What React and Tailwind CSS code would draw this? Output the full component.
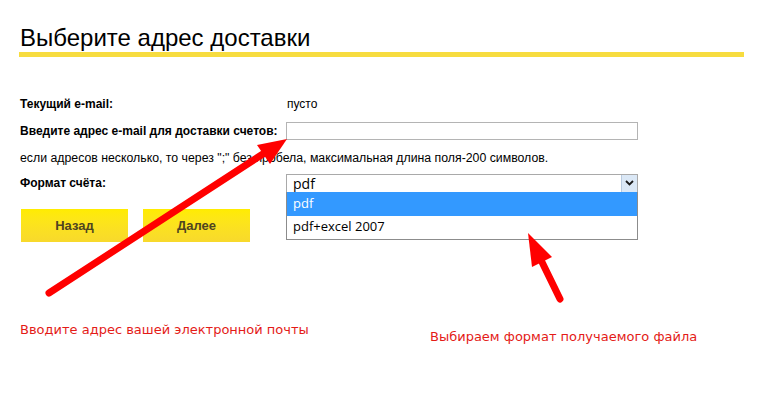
import React from "react";

function Arrows() {
  return (
    <svg
      className="absolute left-0 top-0 pointer-events-none"
      width="761"
      height="399"
      viewBox="0 0 761 399"
    >
      {/* arrow to the e-mail field */}
      <line x1="49" y1="293" x2="266" y2="152" stroke="#ff0000" strokeWidth="7" strokeLinecap="round" />
      <polygon points="287,139 270,164 257,145" fill="#ff0000" />
      {/* arrow to the format list */}
      <line x1="560" y1="299" x2="540" y2="258" stroke="#ff0000" strokeWidth="7" strokeLinecap="round" />
      <polygon points="528,233 552,257 532,267" fill="#ff0000" />
    </svg>
  );
}

function App() {
  return (
    <div
      className="relative w-[761px] h-[399px] bg-white overflow-hidden text-black"
      style={{ fontFamily: '"Liberation Sans", Arial, sans-serif' }}
    >
      <div className="pl-[19px] pt-[24px]">
        <h1 className="w-[725px] pl-[1px] text-[24px] leading-[28px] border-b-[5px] border-[#f7dc3f]">
          Выберите адрес доставки
        </h1>

        <div className="pl-[1px] text-[12px]">
          <div className="flex items-center h-[14px] mt-[40px]">
            <span className="w-[267px] font-bold">Текущий e-mail:</span>
            <span>пусто</span>
          </div>

          <div className="flex items-center h-[18px] mt-[11px]">
            <span className="w-[266px] font-bold">Введите адрес e-mail для доставки счетов:</span>
            <div className="w-[352px] h-[18px] border border-[#b4b4b4] bg-white" />
          </div>

          <div className="flex items-center h-[14px] mt-[11px] text-[12.3px]">
            если адресов несколько, то через ";" без пробела, максимальная длина поля-200 символов.
          </div>

          <div className="flex items-center h-[18px] mt-[9px]">
            <span className="w-[266px] font-bold">Формат счёта:</span>
            <div className="relative w-[352px]">
              <div
                className="flex items-center justify-between h-[19px] border border-[#a9a9a9] bg-white pl-[6px] text-[14px]"
                style={{ fontFamily: '"Open Sans", sans-serif' }}
              >
                <span className="leading-[17px]">pdf</span>
                <span className="flex items-center justify-center w-[16px] h-[17px] bg-[#dbe8f6] border-l border-[#b9cbe0]">
                  <svg width="9" height="6" viewBox="0 0 9 6">
                    <path d="M1 1 L4.5 4.5 L8 1" fill="none" stroke="#1a1a1a" strokeWidth="1.8" />
                  </svg>
                </span>
              </div>
              <div
                className="absolute left-0 top-[18px] w-[352px] border border-[#8c8c8c] border-t-0 bg-white text-[13px]"
                style={{ fontFamily: '"Open Sans", sans-serif' }}
              >
                <div className="h-[24px] flex items-center pl-[6px] bg-[#3399ff] text-white">pdf</div>
                <div className="h-[23px] flex items-center pl-[6px]">pdf+excel 2007</div>
              </div>
            </div>
          </div>

          <div className="flex gap-[15px] mt-[17px] pl-[1px]">
            <button className="w-[107px] h-[33px] bg-gradient-to-b from-[#ffec00] to-[#f8d92c] text-[13px] font-bold text-[#4f4520]">
              Назад
            </button>
            <button className="w-[107px] h-[33px] bg-gradient-to-b from-[#ffec00] to-[#f8d92c] text-[13px] font-bold text-[#4f4520]">
              Далее
            </button>
          </div>

          <div
            className="flex items-start mt-[78px] text-[13px] text-[#e41b17]"
            style={{ fontFamily: '"DejaVu Sans", Verdana, sans-serif' }}
          >
            <span className="w-[410px]">Вводите адрес вашей электронной почты</span>
            <span className="mt-[7px]">Выбираем формат получаемого файла</span>
          </div>
        </div>
      </div>
      <Arrows />
    </div>
  );
}

export default App;
